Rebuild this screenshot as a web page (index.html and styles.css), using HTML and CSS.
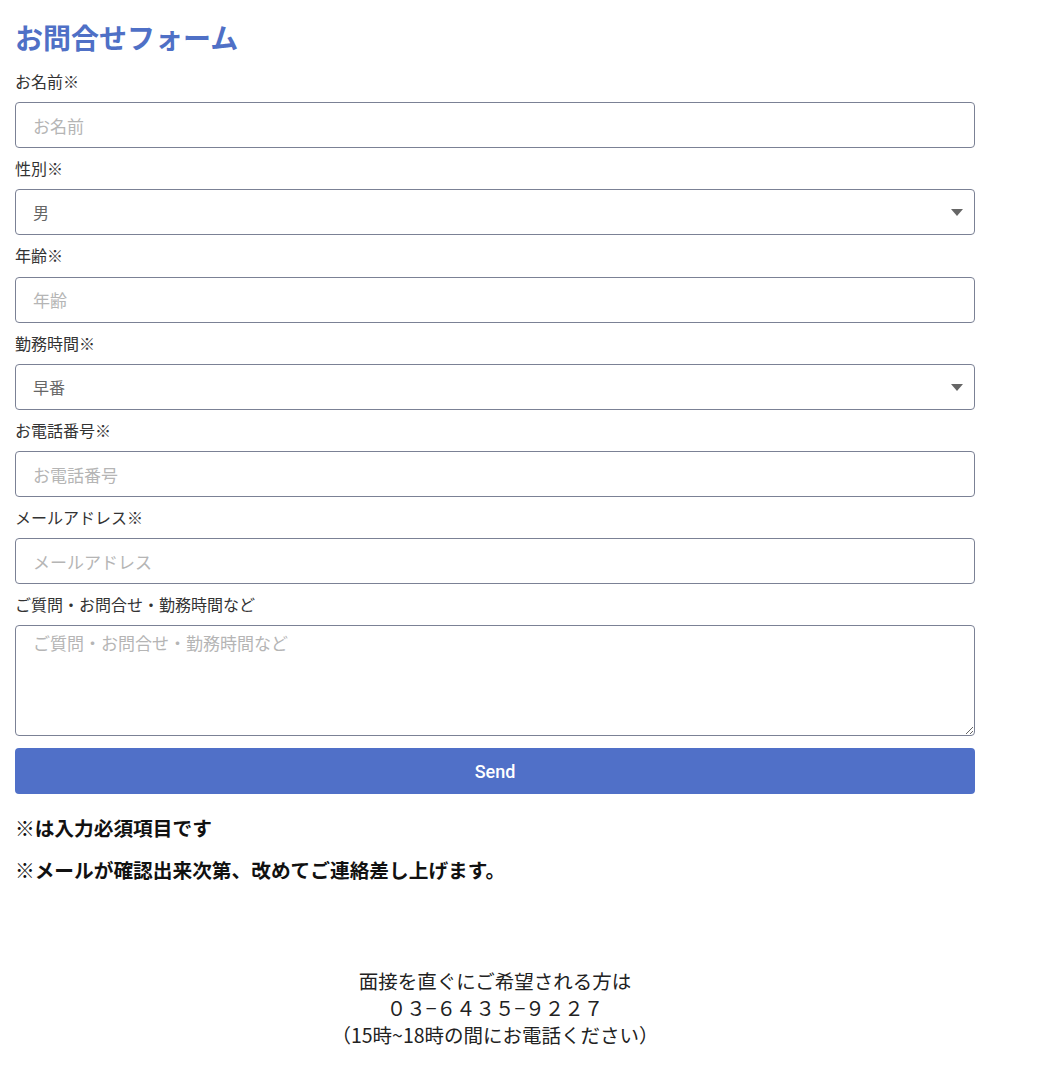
FILE: index.html
```html
<!DOCTYPE html>
<html lang="ja">

<head>
    <meta charset="UTF-8">
    <meta name="viewport" content="width=device-width, initial-scale=1.0">
    <title>お問合せフォーム</title>
    <link rel="stylesheet" href="styles.css">
</head>

<body>
    <div class="contact">
        <h1>お問合せフォーム</h1>

        <form class="contact-form">
            <label class="field-label" for="name">お名前※</label>
            <input type="text" id="name" class="field" placeholder="お名前">

            <label class="field-label" for="gender">性別※</label>
            <div class="select-wrap">
                <select id="gender" class="field">
                    <option>男</option>
                    <option>女</option>
                </select>
            </div>

            <label class="field-label" for="age">年齢※</label>
            <input type="text" id="age" class="field" placeholder="年齢">

            <label class="field-label" for="shift">勤務時間※</label>
            <div class="select-wrap">
                <select id="shift" class="field">
                    <option>早番</option>
                    <option>遅番</option>
                </select>
            </div>

            <label class="field-label" for="tel">お電話番号※</label>
            <input type="tel" id="tel" class="field" placeholder="お電話番号">

            <label class="field-label" for="email">メールアドレス※</label>
            <input type="email" id="email" class="field" placeholder="メールアドレス">

            <label class="field-label" for="message">ご質問・お問合せ・勤務時間など</label>
            <textarea id="message" class="field field-area" placeholder="ご質問・お問合せ・勤務時間など"></textarea>

            <button type="button" class="send-btn">Send</button>
        </form>

        <p class="note">※は入力必須項目です</p>
        <p class="note">※メールが確認出来次第、改めてご連絡差し上げます。</p>

        <div class="phone-info">
            <p>面接を直ぐにご希望される方は</p>
            <p class="phone-number">０３−６４３５−９２２７</p>
            <p>（15時~18時の間にお電話ください）</p>
        </div>
    </div>
</body>

</html>
```

FILE: styles.css
```css
body {
    margin: 0;
    padding: 0 15px;
    font-family: "Noto Sans CJK JP", "Noto Sans", sans-serif;
    color: #222;
    background-color: white;
}

.contact {
    width: 960px;
}

h1 {
    margin: 17px 0 14px;
    font-size: 28px;
    line-height: 40px;
    font-weight: 700;
    color: #4f70c6;
}

.contact-form {
    display: flex;
    flex-direction: column;
}

.field-label {
    display: block;
    margin: 10px 0;
    font-size: 16px;
    line-height: 21.2px;
    color: #333;
}

.contact-form > .field-label:first-child {
    margin-top: 0;
}

.field {
    box-sizing: border-box;
    width: 100%;
    height: 46px;
    margin: 0;
    padding: 0 17px;
    border: 1px solid #7b8195;
    border-radius: 4px;
    background-color: white;
    font-family: inherit;
    font-size: 17px;
    color: #666;
}

.field::placeholder {
    color: #b5b5b5;
}

.select-wrap {
    position: relative;
}

.select-wrap select {
    appearance: none;
    -webkit-appearance: none;
    font-size: 16px;
}

.select-wrap::after {
    content: "";
    position: absolute;
    right: 12px;
    top: 20px;
    border-left: 6px solid transparent;
    border-right: 6px solid transparent;
    border-top: 7px solid #666;
    pointer-events: none;
}

.field-area {
    height: 111px;
    padding: 5px 17px;
    resize: vertical;
    line-height: 24px;
}

.send-btn {
    height: 46px;
    margin-top: 12px;
    border: none;
    border-radius: 4px;
    background-color: #5070c8;
    color: white;
    font-family: Roboto, sans-serif;
    font-size: 18px;
    font-weight: 500;
    cursor: pointer;
}

.note {
    margin: 21px 0 0;
    font-size: 19.7px;
    line-height: 26px;
    font-weight: 700;
    color: #111;
}

.note + .note {
    margin-top: 16px;
}

.phone-info {
    margin-top: 84px;
    text-align: center;
    font-size: 19.5px;
    line-height: 27px;
    color: #222;
}

.phone-info p {
    margin: 0;
}
```
